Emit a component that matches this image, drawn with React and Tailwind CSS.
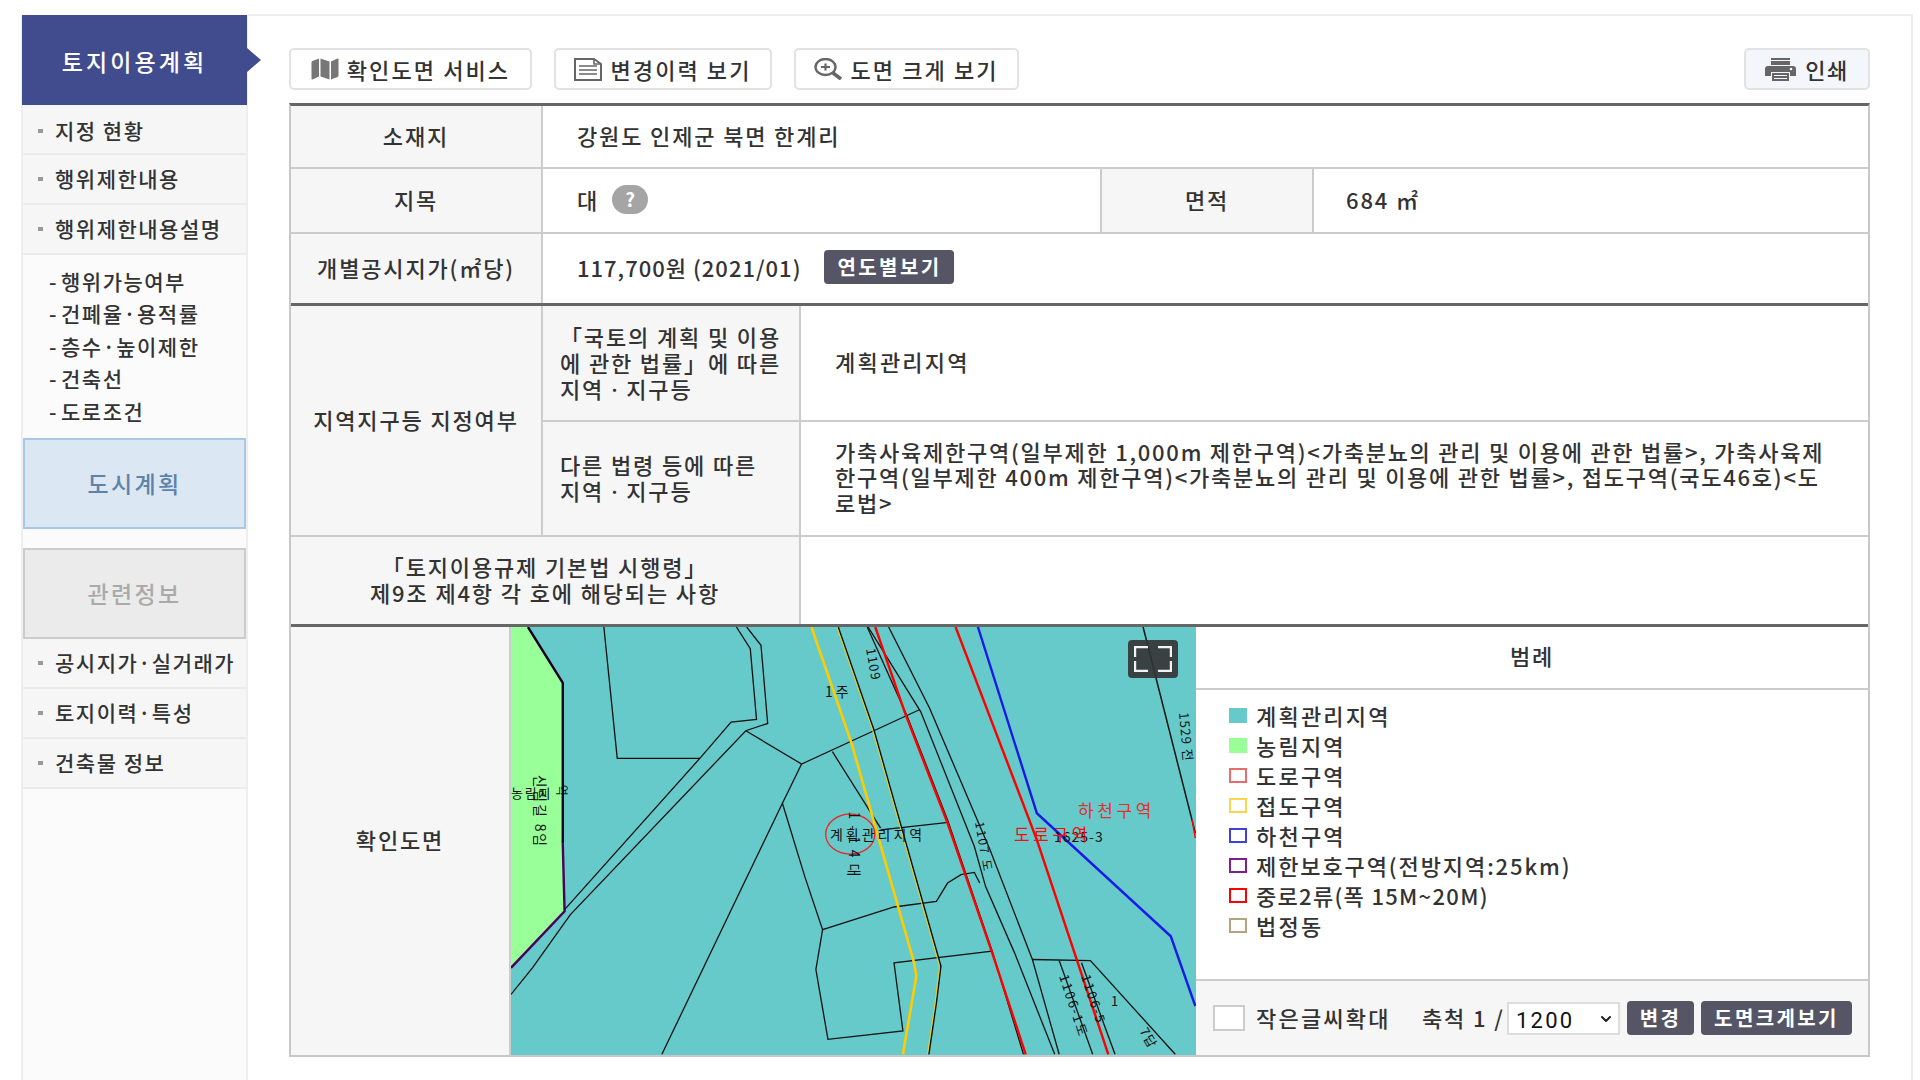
import React from "react";
import { FaMap } from "react-icons/fa";
import { LuChevronDown } from "react-icons/lu";

const th = "flex items-center justify-center border-r-2 border-[#ccc] bg-[#f6f6f6] pb-[3px] font-medium whitespace-nowrap";
const subTh = "flex w-[258px] items-center border-r-2 border-[#ccc] bg-[#f6f6f6] pb-[3px] pl-[17px] leading-[26px] font-medium whitespace-nowrap";
const td = "flex items-center pb-[3px] pl-[34px] whitespace-nowrap";

function Item({ children, first }) {
  return (
    <div className={`flex h-[50px] items-center gap-[12px] border-b-2 border-[#ebebeb] bg-[#f6f6f6] pl-[15px] text-[21px] font-medium tracking-[1.5px] text-[#333] ${first ? "pt-[3px]" : ""}`}>
      <span className="h-[4px] w-[5px] bg-[#999]"></span>
      <span className="whitespace-nowrap">{children}</span>
    </div>
  );
}

function Sub({ children }) {
  return (
    <div className="flex h-[32.5px] items-center gap-[3px] text-[21px] font-medium tracking-[1.5px] text-[#333]">
      <span>-</span>
      <span className="whitespace-nowrap">{children}</span>
    </div>
  );
}

function ToolBtn({ icon, label, w }) {
  return (
    <div className={`flex h-[42px] items-center justify-center gap-[8px] rounded-[5px] border-2 border-[#e2e2e2] bg-white text-[22px] font-medium tracking-[2.1px] text-[#333] ${w}`}>
      {icon}
      <span className="whitespace-nowrap">{label}</span>
    </div>
  );
}

function Legend({ swatch, children, spacing = "tracking-[2.2px]" }) {
  return (
    <div className="flex h-[30.1px] items-center gap-[9px]">
      <span className={`h-[15px] w-[18px] border-2 ${swatch}`}></span>
      <span className={`whitespace-nowrap ${spacing}`}>{children}</span>
    </div>
  );
}

function DarkBtn({ children, w }) {
  return (
    <div className={`flex h-[34px] items-center justify-center rounded-[4px] bg-[#555566] text-[20px] font-bold tracking-[2.4px] text-white ${w}`}>{children}</div>
  );
}

const L = (props) => <path fill="none" vectorEffect="non-scaling-stroke" stroke="#111" strokeWidth="1.3" {...props} />;

function MapDrawing() {
  return (
    <svg width="685" height="428" viewBox="0 0 685 429" preserveAspectRatio="none" className="block">
      <rect width="685" height="429" fill="#66caca" />
      <g transform="scale(0.4464 0.3333) translate(-22 -20)">
        <path d="M22 20 L60 20 L138 188 L142 875 L22 1045 Z" fill="#99ff99" />
        <L d="M60 20 L138 188 L138 670" stroke="#1a0020" strokeWidth="2.4" />
        <L d="M138 670 L142 875 L22 1045" stroke="#4b0060" strokeWidth="2.4" />
        <L d="M230 20 L260 415 L445 415" />
        <L d="M527 20 L558 85 L572 298 L515 306 L445 415 L142 870" />
        <L d="M550 20 L582 75 L597 310 L548 332 L155 885 L70 1045 L22 1125" />
        <L d="M548 332 L673 432 L938 268" />
        <L d="M673 432 L630 550 L360 1305" />
        <L d="M742 395 L850 625" />
        <L d="M850 630 L997 608" />
        <L d="M630 550 L680 770 L720 930 L880 862 L975 845 L1000 790 L1030 765 L1060 758 L1072 790" />
        <L d="M720 930 L705 1050 L732 1260 L900 1235 L880 1030 L1100 995" />
        <L d="M820 20 L910 290 L1000 600 L1100 995 L1170 1305" />
        <L d="M822 20 L940 275 L1060 680 L1085 800 L1150 1000 L1240 1305" />
        <L d="M868 20 L960 265 L1095 690 L1190 1020 L1250 1305" />
        <L d="M1190 1020 L1320 1023 L1510 1305" />
        <L d="M1250 1023 L1325 1305" />
        <L d="M1300 1030 L1375 1305" />
        <L d="M755 20 L835 330 L985 1040 L975 1150 L958 1305" strokeWidth="1.5" />
        <L d="M752 20 L832 330 L982 1040 L972 1150 L955 1305" stroke="#ffcc00" strokeWidth="1" />
        <L d="M695 20 L785 370 L925 1030 L930 1070 L900 1305" stroke="#ffcc00" strokeWidth="2.6" />
        <L d="M838 20 L905 280 L1000 610 L1100 1000 L1175 1305" stroke="#f00" strokeWidth="2.4" />
        <L d="M1018 20 L1200 660 L1360 1305" stroke="#f00" strokeWidth="2.4" />
        <L d="M1068 20 L1200 580 L1500 950 L1555 1160" stroke="#1a1ae6" strokeWidth="2.4" />
        <L d="M1438 20 L1555 640" strokeWidth="1.5" />
        <L d="M1548 600 L1555 655" stroke="#f00" strokeWidth="1.5" />
        <ellipse cx="782" cy="643" rx="55" ry="60" fill="none" stroke="#ee2222" strokeWidth="1.3" vectorEffect="non-scaling-stroke" />
      </g>
      <g fontSize="13" fill="#111">
        <text x="314" y="70" fontSize="14" letterSpacing="3">1주</text>
        <text x="319" y="213" fontSize="14" letterSpacing="3">계획관리지역</text>
        <text transform="translate(338 185) rotate(90)" fontSize="14" letterSpacing="6">1-14대</text>
        <text transform="translate(355 22) rotate(80)" fontSize="13" letterSpacing="1">1109</text>
        <text transform="translate(668 86) rotate(85)" fontSize="13" letterSpacing="1">1529 전</text>
        <text transform="translate(464 196) rotate(80)" fontSize="12">1107 도</text>
        <text transform="translate(548 350) rotate(72)" fontSize="13">1106-1도</text>
        <text transform="translate(570 350) rotate(72)" fontSize="13">1106-5</text>
        <text x="600" y="380" fontSize="13">1</text>
        <text transform="translate(628 405) rotate(60)" fontSize="13" letterSpacing="1">7답</text>
        <text transform="translate(24 148) rotate(90)" fontSize="14">신림길 8임</text>
        <text transform="translate(46 158) rotate(90)" fontSize="12">역</text>
        <text x="0" y="171" fontSize="13">농림지</text>
        <text x="543" y="216" fontSize="14" letterSpacing="1">1625-3</text>
        <text x="567" y="190" fill="#e03030" fontSize="17" letterSpacing="3.6">하천구역</text>
        <text x="503" y="215" fill="#f01010" fontSize="17" letterSpacing="3.6">도로구역</text>
      </g>
    </svg>
  );
}

export default function App() {
  return (
    <div className="flex h-[1080px] w-[1920px] overflow-hidden bg-white font-['Noto_Sans_CJK_KR',sans-serif] text-[#333]">
      {/* sidebar */}
      <aside className="relative mt-[15px] ml-[21px] flex w-[227px] shrink-0 flex-col border-x-2 border-[#eee] bg-[#fbfbfb]">
        <div className="relative -mx-[1px] flex h-[90px] items-center justify-center bg-[#414c8f] pt-[2px] text-[23px] font-medium tracking-[3.1px] text-white">
          토지이용계획
          <span className="absolute top-[33px] -right-[14px] h-0 w-0 border-y-[12px] border-l-[14px] border-y-transparent border-l-[#414c8f]"></span>
        </div>
        <Item first>지정 현황</Item>
        <Item>행위제한내용</Item>
        <Item>행위제한내용설명</Item>
        <div className="flex h-[183px] flex-col bg-[#fbfbfb] pt-[10px] pl-[26px]">
          <Sub>행위가능여부</Sub>
          <Sub>건폐율·용적률</Sub>
          <Sub>층수·높이제한</Sub>
          <Sub>건축선</Sub>
          <Sub>도로조건</Sub>
        </div>
        <div className="flex h-[91px] items-center justify-center border-2 border-[#a9c7e8] bg-[#dce7f4] text-[23px] font-medium tracking-[2.4px] text-[#5e82a8]">도시계획</div>
        <div className="h-[19px]"></div>
        <div className="flex h-[91px] items-center justify-center border-2 border-[#ccc] bg-[#ebebeb] text-[23px] font-medium tracking-[2.4px] text-[#aaa]">관련정보</div>
        <Item>공시지가·실거래가</Item>
        <Item>토지이력·특성</Item>
        <Item>건축물 정보</Item>
      </aside>

      {/* main */}
      <main className="mt-[14px] mr-[7px] flex flex-1 flex-col border-t-2 border-r-2 border-[#eee] pt-[32px] pl-[41px]">
        <div className="flex w-[1581px] items-center gap-[22px]">
          <ToolBtn w="w-[243px]" label="확인도면 서비스" icon={<FaMap className="h-[24px] w-[28px] text-[#777]" />} />
          <ToolBtn w="w-[218px]" label="변경이력 보기" icon={
            <svg width="28" height="23" viewBox="0 0 28 23" fill="none" stroke="#666" strokeWidth="2">
              <path d="M1 1H20L27 6V22H1Z" />
              <path d="M20 1V6H27M5 8H23M5 12H23M5 16H23" strokeWidth="1.6" />
            </svg>
          } />
          <ToolBtn w="w-[225px]" label="도면 크게 보기" icon={
            <svg width="28" height="22" viewBox="0 0 28 22" fill="none" stroke="#666">
              <ellipse cx="11.5" cy="9" rx="10" ry="8" strokeWidth="2.4" />
              <path d="M7 9H16M11.5 5.5V12.5" strokeWidth="2.2" />
              <path d="M19 15L27 21" strokeWidth="3.6" />
            </svg>
          } />
          <div className="ml-auto flex h-[42px] w-[126px] items-center justify-center gap-[9px] rounded-[5px] border-2 border-[#e2e2e2] bg-[#f3f7fc] text-[22px] font-medium tracking-[1.6px] text-[#333]">
            <svg width="31" height="23" viewBox="0 0 31 23" fill="#666">
              <path d="M6 0H25V2H6ZM6 3H25V7H6Z" />
              <path d="M3 8H28A3 3 0 0 1 31 11V18H25V14H6V18H0V11A3 3 0 0 1 3 8Z" />
              <path d="M7 15H24V23H7ZM9 17V18H22V17ZM9 20V21H22V20Z" fillRule="evenodd" />
              <circle cx="26" cy="11" r="1.3" fill="#fff" />
            </svg>
            인쇄
          </div>
        </div>

        <div className="mt-[13px] flex w-[1581px] flex-col border-x-2 border-b-2 border-t-[3px] border-[#c8c8c8] border-t-[#666] text-[22px] font-medium tracking-[1.85px]">
          {/* row 1 */}
          <div className="flex h-[63px] border-b-2 border-[#ccc]">
            <div className={`${th} w-[252px]`}>소재지</div>
            <div className={td}>강원도 인제군 북면 한계리</div>
          </div>
          {/* row 2 */}
          <div className="flex h-[65px] border-b-2 border-[#ccc]">
            <div className={`${th} w-[252px]`}>지목</div>
            <div className={`${td} w-[559px] gap-[13px] border-r-2 border-[#ccc]`}>
              대
              <span className="flex h-[29px] w-[36px] items-center justify-center rounded-full bg-[#a5a5a5] text-[19px] font-bold tracking-normal text-white">?</span>
            </div>
            <div className={`${th} w-[212px]`}>면적</div>
            <div className="flex items-center pb-[3px] pl-[32px]">684 ㎡</div>
          </div>
          {/* row 3 */}
          <div className="flex h-[72px] border-b-[3px] border-[#666]">
            <div className={`${th} w-[252px]`}>개별공시지가(㎡당)</div>
            <div className={`${td} tracking-[1px]`}>
              <span>117,700원 (2021/01)</span>
              <span className="ml-[23px] flex h-[34px] w-[130px] items-center justify-center rounded-[4px] bg-[#555566] text-[20px] font-bold tracking-[2.4px] text-white">연도별보기</span>
            </div>
          </div>
          {/* row 4 */}
          <div className="flex h-[231px] border-b-2 border-[#ccc]">
            <div className={`${th} w-[252px]`}>지역지구등 지정여부</div>
            <div className="flex flex-1 flex-col">
              <div className="flex h-[116px] border-b-2 border-[#ccc]">
                <div className={subTh}>
                  <span>「국토의 계획 및 이용<br />에 관한 법률」에 따른<br />지역ㆍ지구등</span>
                </div>
                <div className={`${td} tracking-[2.2px]`}>계획관리지역</div>
              </div>
              <div className="flex flex-1">
                <div className={subTh}>
                  <span>다른 법령 등에 따른<br />지역ㆍ지구등</span>
                </div>
                <div className={`${td} leading-[25.5px] tracking-[1.75px]`}>
                  <span>가축사육제한구역(일부제한 1,000m 제한구역)&lt;가축분뇨의 관리 및 이용에 관한 법률&gt;, 가축사육제<br />한구역(일부제한 400m 제한구역)&lt;가축분뇨의 관리 및 이용에 관한 법률&gt;, 접도구역(국도46호)&lt;도<br />로법&gt;</span>
                </div>
              </div>
            </div>
          </div>
          {/* row 5 */}
          <div className="flex h-[90px] border-b-[3px] border-[#666]">
            <div className={`${th} w-[510px] text-center leading-[26px]`}>
              <span>「토지이용규제 기본법 시행령」<br />제9조 제4항 각 호에 해당되는 사항</span>
            </div>
            <div className="flex-1"></div>
          </div>
          {/* row 6 */}
          <div className="flex h-[428px]">
            <div className={`${th} w-[220px]`}>확인도면</div>
            <div className="relative w-[685px] shrink-0 border-r border-[#ccc] font-normal">
              <MapDrawing />
              <div className="absolute top-[13px] left-[617px] flex h-[38px] w-[50px] items-center justify-center rounded-[4px] bg-[#333]/90">
                <svg width="38" height="26" viewBox="0 0 38 26" fill="none" stroke="#f2f2f2" strokeWidth="2.4">
                  <path d="M1 11V1H14M24 1H37V11M37 15V25H24M14 25H1V15" />
                </svg>
              </div>
            </div>
            <div className="flex flex-1 flex-col">
              <div className="flex h-[63px] items-center justify-center border-b-2 border-[#ccc] pb-[4px]">범례</div>
              <div className="flex flex-1 flex-col pt-[10px] pl-[33px]">
                <Legend swatch="border-[#66caca] bg-[#66caca]">계획관리지역</Legend>
                <Legend swatch="border-[#99ff99] bg-[#99ff99]">농림지역</Legend>
                <Legend swatch="border-[#e86c6c]">도로구역</Legend>
                <Legend swatch="border-[#ffd54f]">접도구역</Legend>
                <Legend swatch="border-[#4040e0]">하천구역</Legend>
                <Legend swatch="border-[#7f1f8f]" spacing="tracking-[1.9px]">제한보호구역(전방지역:25km)</Legend>
                <Legend swatch="border-[#ff0000]" spacing="tracking-[1.3px]">중로2류(폭 15M~20M)</Legend>
                <Legend swatch="border-[#b5a27f]">법정동</Legend>
              </div>
              <div className="flex h-[76px] items-center gap-[7px] border-t-2 border-[#ccc] bg-[#f6f6f6] pl-[17px]">
                <span className="h-[26px] w-[32px] border-2 border-[#ccc] bg-white"></span>
                <span className="ml-[4px] w-[159px] whitespace-nowrap pb-[2px] tracking-[2.2px]">작은글씨확대</span>
                <span className="w-[78px] whitespace-nowrap pb-[2px]">축척 1 /</span>
                <div className="relative h-[33px] w-[113px]">
                  <select defaultValue="1200" className="h-full w-full appearance-none border-2 border-[#ddd] bg-white pl-[7px] font-['Roboto',sans-serif] text-[22px] font-normal tracking-[2.2px] text-[#111]">
                    <option>1200</option>
                    <option>2400</option>
                  </select>
                  <LuChevronDown strokeWidth={3} className="pointer-events-none absolute top-[9px] right-[6px] h-[16px] w-[16px] text-[#222]" />
                </div>
                <DarkBtn w="w-[67px]">변경</DarkBtn>
                <DarkBtn w="w-[151px]">도면크게보기</DarkBtn>
              </div>
            </div>
          </div>
        </div>
      </main>
    </div>
  );
}
